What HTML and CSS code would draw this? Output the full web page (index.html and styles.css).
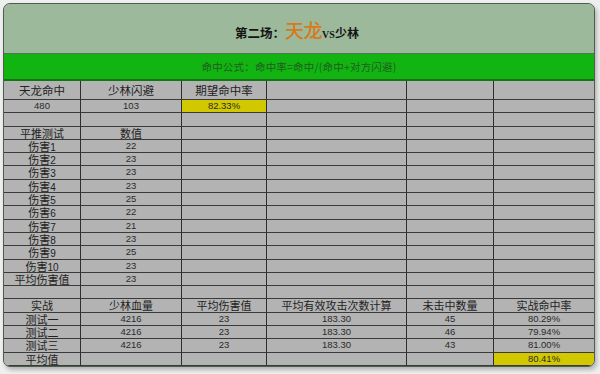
FILE: index.html
```html
<!DOCTYPE html>
<html>
<head>
<meta charset="utf-8">
<link rel="stylesheet" href="styles.css">
</head>
<body>
<div class="frame">
  <div class="title">
    <span class="t1">第二场：</span><span class="t2">天龙</span><span class="t3">VS</span><span class="t4">少林</span>
  </div>
  <div class="formula">命中公式：命中率=命中/(命中+对方闪避)</div>
  <div class="grid">
    <div class="c h">天龙命中</div><div class="c h">少林闪避</div><div class="c h">期望命中率</div><div class="c h"></div><div class="c h"></div><div class="c h"></div>
    <div class="c n">480</div><div class="c n">103</div><div class="c n y">82.33%</div><div class="c"></div><div class="c"></div><div class="c"></div>
    <div class="c"></div><div class="c"></div><div class="c"></div><div class="c"></div><div class="c"></div><div class="c"></div>
    <div class="c">平推测试</div><div class="c">数值</div><div class="c"></div><div class="c"></div><div class="c"></div><div class="c"></div>
    <div class="c">伤害<span class="d">1</span></div><div class="c n">22</div><div class="c"></div><div class="c"></div><div class="c"></div><div class="c"></div>
    <div class="c">伤害<span class="d">2</span></div><div class="c n">23</div><div class="c"></div><div class="c"></div><div class="c"></div><div class="c"></div>
    <div class="c">伤害<span class="d">3</span></div><div class="c n">23</div><div class="c"></div><div class="c"></div><div class="c"></div><div class="c"></div>
    <div class="c">伤害<span class="d">4</span></div><div class="c n">23</div><div class="c"></div><div class="c"></div><div class="c"></div><div class="c"></div>
    <div class="c">伤害<span class="d">5</span></div><div class="c n">25</div><div class="c"></div><div class="c"></div><div class="c"></div><div class="c"></div>
    <div class="c">伤害<span class="d">6</span></div><div class="c n">22</div><div class="c"></div><div class="c"></div><div class="c"></div><div class="c"></div>
    <div class="c">伤害<span class="d">7</span></div><div class="c n">21</div><div class="c"></div><div class="c"></div><div class="c"></div><div class="c"></div>
    <div class="c">伤害<span class="d">8</span></div><div class="c n">23</div><div class="c"></div><div class="c"></div><div class="c"></div><div class="c"></div>
    <div class="c">伤害<span class="d">9</span></div><div class="c n">25</div><div class="c"></div><div class="c"></div><div class="c"></div><div class="c"></div>
    <div class="c">伤害<span class="d">10</span></div><div class="c n">23</div><div class="c"></div><div class="c"></div><div class="c"></div><div class="c"></div>
    <div class="c">平均伤害值</div><div class="c n">23</div><div class="c"></div><div class="c"></div><div class="c"></div><div class="c"></div>
    <div class="c"></div><div class="c"></div><div class="c"></div><div class="c"></div><div class="c"></div><div class="c"></div>
    <div class="c">实战</div><div class="c">少林血量</div><div class="c">平均伤害值</div><div class="c">平均有效攻击次数计算</div><div class="c">未击中数量</div><div class="c">实战命中率</div>
    <div class="c">测试一</div><div class="c n">4216</div><div class="c n">23</div><div class="c n">183.30</div><div class="c n">45</div><div class="c n">80.29%</div>
    <div class="c">测试二</div><div class="c n">4216</div><div class="c n">23</div><div class="c n">183.30</div><div class="c n">46</div><div class="c n">79.94%</div>
    <div class="c">测试三</div><div class="c n">4216</div><div class="c n">23</div><div class="c n">183.30</div><div class="c n">43</div><div class="c n">81.00%</div>
    <div class="c">平均值</div><div class="c"></div><div class="c"></div><div class="c"></div><div class="c"></div><div class="c n y">80.41%</div>
  </div>
</div>
</body>
</html>
```
FILE: styles.css
```css
html, body {
  margin: 0;
  padding: 0;
}
body {
  background: #efefef;
  width: 600px;
  height: 374px;
  overflow: hidden;
  font-family: "Noto Sans CJK SC", "Liberation Sans", sans-serif;
}
.frame {
  margin: 3px 0 0 3px;
  width: 590px;
  border: 1px solid #4d5e4d;
  border-radius: 7px;
  overflow: hidden;
  background: #b3b3b3;
  box-shadow: 2px 3px 4px rgba(0,0,0,0.25);
}
.title {
  height: 50px;
  background: #9cb99b;
  border-bottom: 1px solid #56725a;
  display: flex;
  justify-content: center;
  align-items: baseline;
  box-sizing: border-box;
  line-height: 52px;
  color: #141414;
}
.t1 {
  font-weight: 700;
  font-size: 12.5px;
  margin-left: -4px;
}
.t2 {
  font-size: 19px;
  color: #d67a1c;
  font-weight: 500;
  letter-spacing: -0.5px;
}
.t3 {
  font-family: "Liberation Serif", serif;
  font-weight: 700;
  font-size: 10px;
}
.t4 {
  font-weight: 700;
  font-size: 12px;
}
.formula {
  height: 25px;
  background: #12b412;
  border-bottom: 2px solid #157515;
  display: flex;
  justify-content: center;
  align-items: center;
  font-size: 10.5px;
  color: #1f5e1f;
  letter-spacing: 0.2px;
}
.grid {
  display: grid;
  grid-template-columns: 77px 101px 85px 140px 87px 100px;
  grid-template-rows: 19px repeat(20, 13.3px);
  background: #b3b3b3;
}
.c {
  border-right: 1px solid #2e2e2e;
  border-bottom: 1px solid #3a3a3a;
  text-align: center;
  font-size: 11px;
  line-height: 12.3px;
  color: #222;
  white-space: nowrap;
}
.c:nth-child(6n) {
  border-right: none;
}
.h {
  font-size: 11.5px;
  line-height: 19px;
}
.n {
  font-family: "Liberation Sans", sans-serif;
  font-size: 9.5px;
  color: #2a2a2a;
}
.d {
  font-family: "Liberation Sans", sans-serif;
  font-size: 10px;
}
.y {
  background: #d2c800;
}
```
